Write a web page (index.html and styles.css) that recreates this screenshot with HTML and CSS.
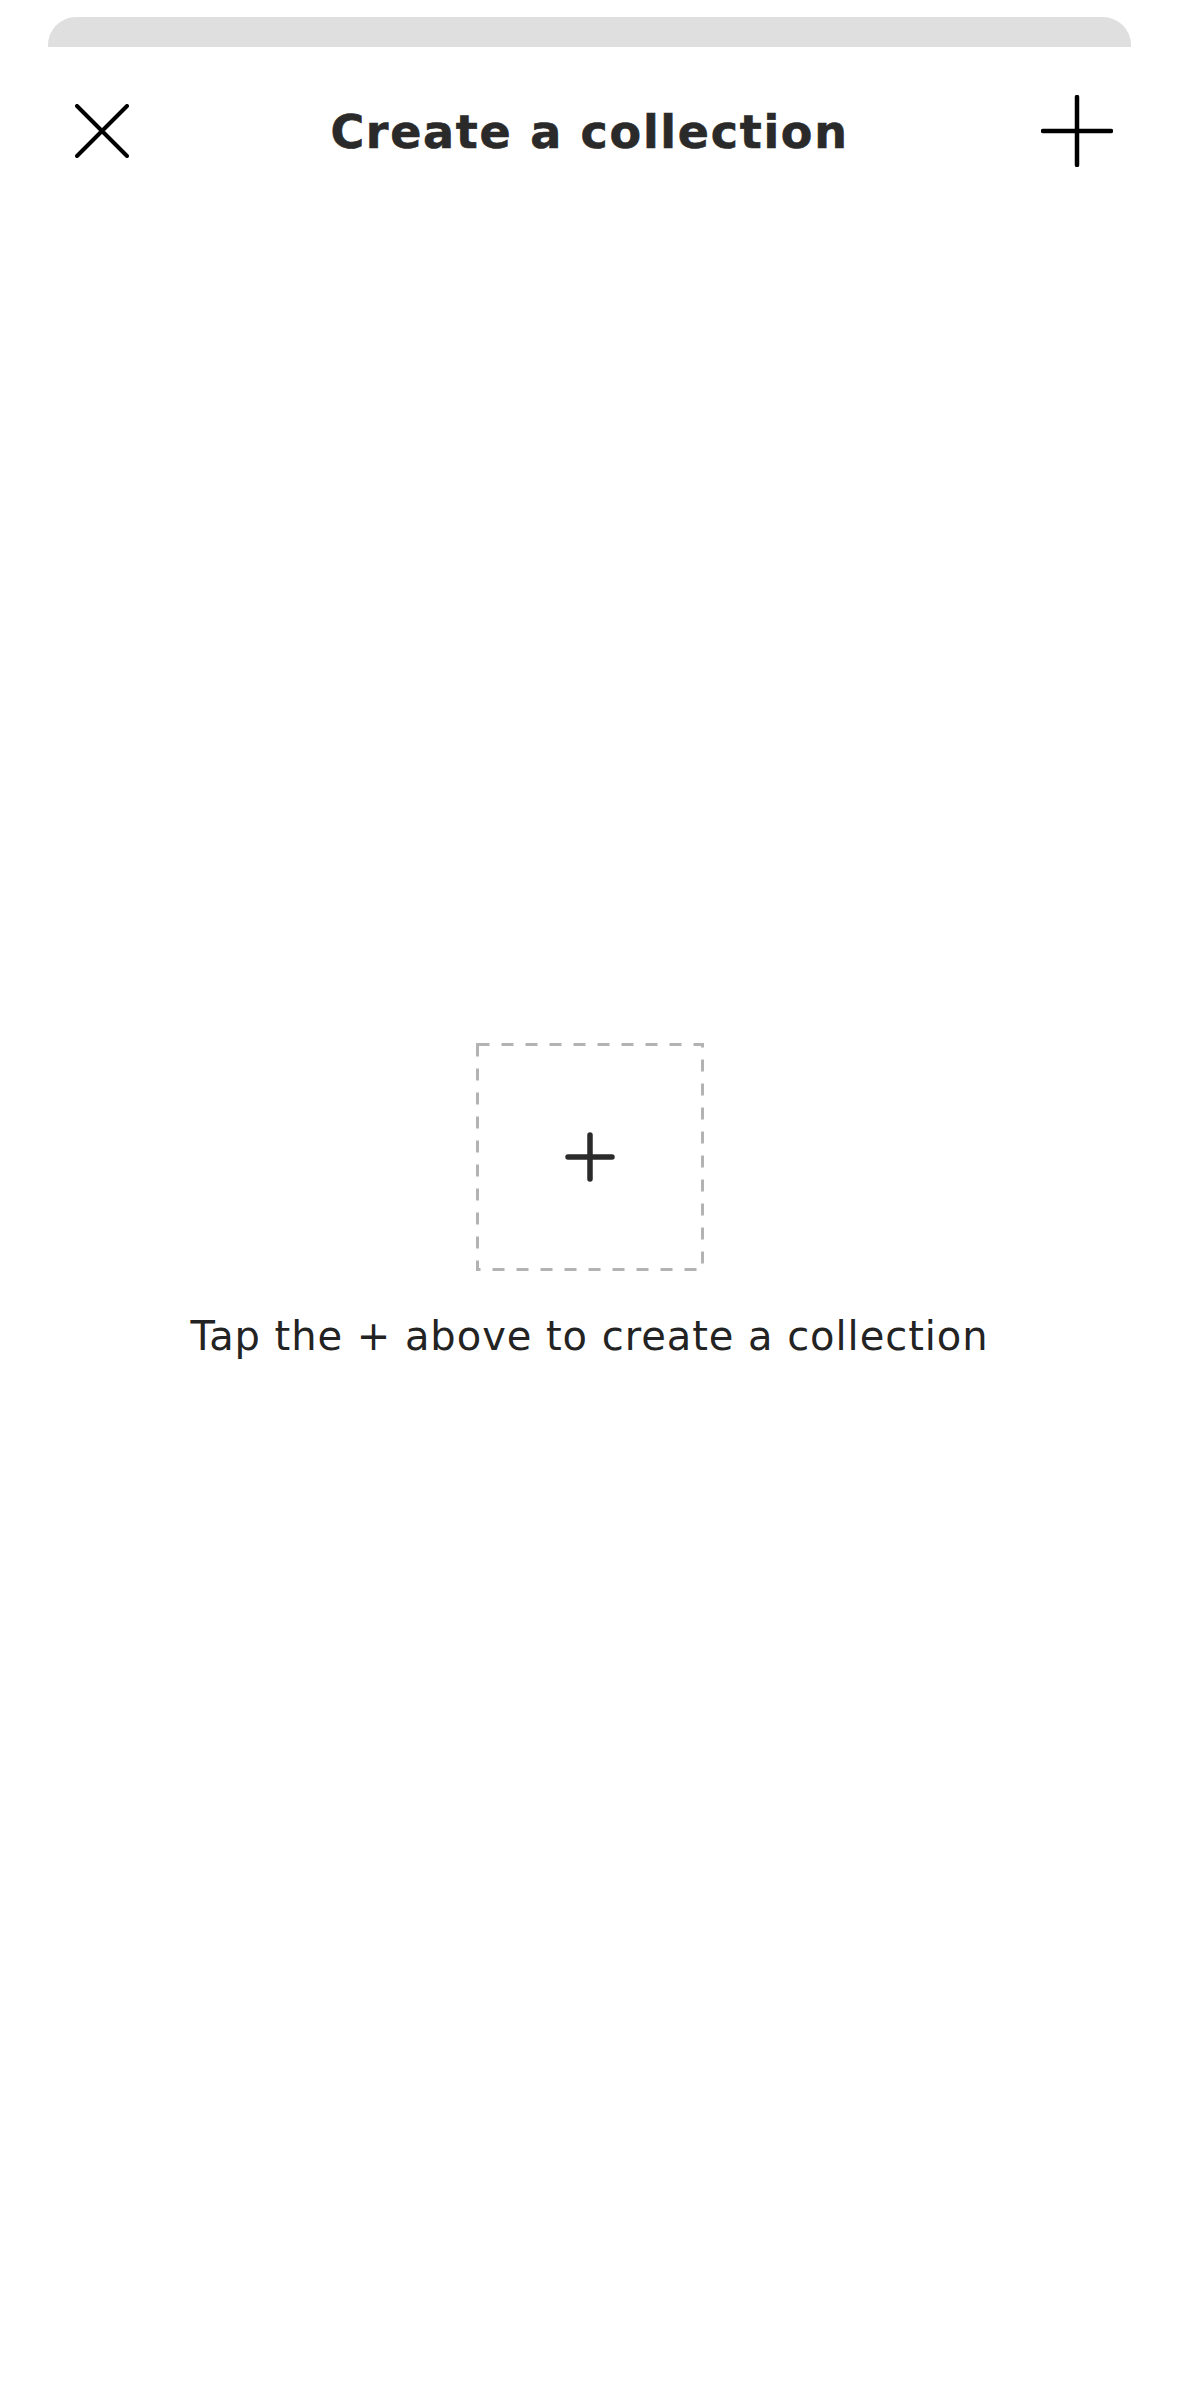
FILE: index.html
```html
<!DOCTYPE html>
<html lang="en">
<head>
<meta charset="utf-8">
<title>Create a collection</title>
<link rel="stylesheet" href="styles.css">
</head>
<body>
<div class="sheet-handle"></div>
<header class="header">
  <button class="icon-btn close-btn" aria-label="Close">
    <svg width="54" height="54" viewBox="0 0 54 54"><path d="M2 2 L52 52 M52 2 L2 52" stroke="#000" stroke-width="4" stroke-linecap="round" fill="none"/></svg>
  </button>
  <h1 class="title">Create a collection</h1>
  <button class="icon-btn add-btn" aria-label="Add">
    <svg width="72" height="72" viewBox="0 0 72 72"><path d="M36 2 V70 M2 36 H70" stroke="#000" stroke-width="4.5" stroke-linecap="round" fill="none"/></svg>
  </button>
</header>
<main class="empty">
  <div class="dashed-box">
    <svg class="dash-frame" width="228" height="228" viewBox="0 0 228 228"><rect x="1.5" y="1.5" width="225" height="225" fill="none" stroke="#b3b3b3" stroke-width="3" stroke-dasharray="12 12"/></svg>
    <svg class="box-plus" width="50" height="50" viewBox="0 0 50 50"><path d="M25 3 V47 M3 25 H47" stroke="#2b2b2b" stroke-width="5.5" stroke-linecap="round" fill="none"/></svg>
  </div>
  <p class="hint">Tap the + above to create a collection</p>
</main>
</body>
</html>
```
FILE: styles.css
```css
html, body {
  margin: 0;
  padding: 0;
  background: #ffffff;
}
body {
  width: 1179px;
  min-height: 2396px;
  font-family: "DejaVu Sans", "Liberation Sans", sans-serif;
  color: #262626;
}
.sheet-handle {
  margin: 17px 48px 0 48px;
  height: 30px;
  background: #dfdfdf;
  border-radius: 28px 28px 0 0;
}
.header {
  display: grid;
  grid-template-columns: 1fr auto 1fr;
  align-items: center;
  height: 168px;
  padding: 0 66px;
}
.icon-btn {
  background: none;
  border: 0;
  padding: 0;
  display: flex;
}
.close-btn {
  justify-self: start;
  margin-left: 9px;
}
.add-btn {
  justify-self: end;
}
.title {
  margin: 0;
  font-size: 46px;
  font-weight: 700;
  letter-spacing: 1.7px;
  color: #2a2a2a;
  line-height: 1;
  padding-top: 2px;
  -webkit-text-stroke: 0.6px #2a2a2a;
}
.empty {
  display: flex;
  flex-direction: column;
  align-items: center;
  padding-top: 828px;
}
.dashed-box {
  width: 228px;
  height: 228px;
  display: grid;
  place-items: center;
}
.dash-frame, .box-plus {
  grid-area: 1 / 1;
}
.hint {
  margin: 41px 0 0 0;
  font-size: 40px;
  line-height: 48px;
  letter-spacing: 0.95px;
  color: #232323;
}
```
